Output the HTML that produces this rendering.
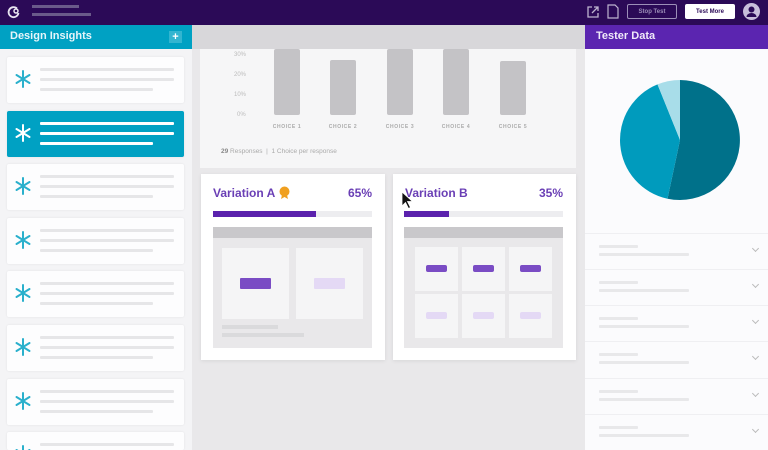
<!DOCTYPE html>
<html><head><meta charset="utf-8"><style>
*{margin:0;padding:0;box-sizing:border-box}
html,body{width:768px;height:450px;overflow:hidden}
body{position:relative;background:#e9e8ea;font-family:"Liberation Sans",sans-serif}
#wrap{position:absolute;left:0;top:0;width:768px;height:450px;overflow:hidden}
.a{position:absolute}
.ln{position:absolute;height:3px;border-radius:1px;background:#e6e6e8}
.card{position:absolute;left:7px;width:177px;height:46px;background:#fdfdfe;border-radius:2px;box-shadow:0 0 2px rgba(0,0,0,.08);overflow:hidden}
.ast{position:absolute;left:8px;top:11px}
.bar{position:absolute;width:26px;background:#c4c3c6;border-radius:2px}
.lbl{position:absolute;top:124px;font-size:5px;letter-spacing:.6px;color:#aaa;font-weight:bold;width:40px;text-align:center}
.row{position:absolute;left:585px;width:183px;height:36px;border-top:1px solid #efeff2;overflow:hidden}
.chev{position:absolute;right:10px;top:12px;width:5px;height:5px;border-right:1px solid #bbb;border-bottom:1px solid #bbb;transform:rotate(45deg)}
.btn{display:flex;align-items:center;justify-content:center;font-size:6px;font-weight:bold;border-radius:2px}
</style></head><body><div id="wrap">
<div class="a" style="left:0;top:0;width:768px;height:25px;background:#2b0a57"></div>
<svg class="a" style="left:7px;top:5px" width="14" height="14" viewBox="0 0 14 14"><path d="M10 3.5A5 5 0 1 0 11.5 8" fill="none" stroke="#e8e4f0" stroke-width="1.8"/><circle cx="9" cy="6" r="2" fill="none" stroke="#e8e4f0" stroke-width="1.5"/></svg>
<div class="a" style="left:32px;top:5px;width:47px;height:3px;background:#6a5a8a"></div>
<div class="a" style="left:32px;top:13px;width:59px;height:3px;background:#6a5a8a"></div>
<svg class="a" style="left:586px;top:5px" width="14" height="14" viewBox="0 0 14 14" fill="none" stroke="#bdb3cf" stroke-width="1.3"><path d="M6 2H2v10h10V8M8 2h4v4M12 2L6 8"/></svg>
<svg class="a" style="left:607px;top:4px" width="12" height="15" viewBox="0 0 12 15" fill="none" stroke="#bdb3cf" stroke-width="1.2"><path d="M1 1h7l3 3v10H1z"/></svg>
<div class="a btn" style="left:627px;top:4px;width:50px;height:15px;border:1px solid #9c8fb8;color:#9c8fb8">Stop Test</div>
<div class="a btn" style="left:685px;top:4px;width:50px;height:15px;background:#fff;color:#2b0a57">Test More</div>
<svg class="a" style="left:743px;top:3px" width="17" height="17" viewBox="0 0 17 17"><circle cx="8.5" cy="8.5" r="8.5" fill="#c8bedb"/><circle cx="8.5" cy="6.5" r="3" fill="#2b0a57"/><path d="M3.5 14a5 4 0 0 1 10 0z" fill="#2b0a57"/></svg>

<div class="a" style="left:0;top:25px;width:192px;height:425px;background:#f4f4f6"></div>
<div class="a" style="left:0;top:25px;width:192px;height:24px;background:#00a1c3"></div>
<div class="a" style="left:10px;top:30px;color:#e6f5fa;font-size:11px;font-weight:bold">Design Insights</div>
<div class="a" style="left:169px;top:31px;width:13px;height:12px;background:#33b5d0;color:#fff;font-size:11px;line-height:12px;text-align:center;font-weight:bold">+</div>
<div id="cards"></div>

<div class="a" style="left:192px;top:25px;width:393px;height:24px;background:#d8d7da"></div>
<div class="a" style="left:200px;top:49px;width:376px;height:119px;background:#f6f6f7"></div>
<div class="a" style="left:234px;top:52px;font-size:6px;color:#bbb">30%</div>
<div class="a" style="left:234px;top:72px;font-size:6px;color:#bbb">20%</div>
<div class="a" style="left:234px;top:92px;font-size:6px;color:#bbb">10%</div>
<div class="a" style="left:237px;top:112px;font-size:6px;color:#bbb">0%</div>
<div class="bar" style="left:274px;top:49px;height:66px"></div>
<div class="bar" style="left:330px;top:60px;height:55px"></div>
<div class="bar" style="left:387px;top:49px;height:66px"></div>
<div class="bar" style="left:443px;top:49px;height:66px"></div>
<div class="bar" style="left:500px;top:61px;height:54px"></div>
<div class="lbl" style="left:267px">CHOICE 1</div>
<div class="lbl" style="left:323px">CHOICE 2</div>
<div class="lbl" style="left:380px">CHOICE 3</div>
<div class="lbl" style="left:436px">CHOICE 4</div>
<div class="lbl" style="left:493px">CHOICE 5</div>
<div class="a" style="left:221px;top:148px;font-size:6.5px;color:#aaa"><b style="color:#888">29</b> Responses &nbsp;|&nbsp; 1 Choice per response</div>

<div class="a" style="left:201px;top:174px;width:184px;height:186px;background:#fff;box-shadow:0 1px 4px rgba(0,0,0,.08)"></div>
<div class="a" style="left:213px;top:186px;font-size:12px;font-weight:bold;color:#6a3fb5">Variation A</div>
<svg class="a" style="left:279px;top:186px" width="11" height="13" viewBox="0 0 11 13"><circle cx="5.5" cy="5.5" r="5" fill="#f0a020"/><path d="M3 9l-1 4 3.5-2 3.5 2-1-4z" fill="#f0a020"/></svg>
<div class="a" style="left:348px;top:186px;font-size:12px;font-weight:bold;color:#6a3fb5">65%</div>
<div class="a" style="left:213px;top:211px;width:159px;height:6px;background:#ededf0"></div>
<div class="a" style="left:213px;top:211px;width:103px;height:6px;background:#5b22ad"></div>
<div class="a" style="left:213px;top:227px;width:159px;height:121px;background:#e9e8ea"></div>
<div class="a" style="left:213px;top:227px;width:159px;height:11px;background:#c9c8cb"></div>
<div class="a" style="left:222px;top:248px;width:67px;height:71px;background:#f5f5f6"></div>
<div class="a" style="left:296px;top:248px;width:67px;height:71px;background:#f5f5f6"></div>
<div class="a" style="left:240px;top:278px;width:31px;height:11px;background:#7a4cc4;border-radius:1px"></div>
<div class="a" style="left:314px;top:278px;width:31px;height:11px;background:#e4d9f5;border-radius:1px"></div>
<div class="a" style="left:222px;top:325px;width:56px;height:4px;background:#dadadc"></div>
<div class="a" style="left:222px;top:333px;width:82px;height:4px;background:#dadadc"></div>

<div class="a" style="left:393px;top:174px;width:183px;height:186px;background:#fff;box-shadow:0 1px 4px rgba(0,0,0,.08)"></div>
<div class="a" style="left:405px;top:186px;font-size:12px;font-weight:bold;color:#6a3fb5">Variation B</div>
<div class="a" style="left:539px;top:186px;font-size:12px;font-weight:bold;color:#6a3fb5">35%</div>
<div class="a" style="left:404px;top:211px;width:159px;height:6px;background:#ededf0"></div>
<div class="a" style="left:404px;top:211px;width:45px;height:6px;background:#5b22ad"></div>
<div class="a" style="left:404px;top:227px;width:159px;height:121px;background:#e9e8ea"></div>
<div class="a" style="left:404px;top:227px;width:159px;height:11px;background:#c9c8cb"></div>
<div id="grid"></div>
<svg class="a" style="left:401px;top:191px" width="12" height="18" viewBox="0 0 12 18"><path d="M1 1v14l3.5-3.5 3 6 2-1-3-6h5z" fill="#111" stroke="#fff" stroke-width=".8"/></svg>

<div class="a" style="left:585px;top:25px;width:183px;height:425px;background:#fbfbfd"></div>
<div class="a" style="left:585px;top:25px;width:183px;height:24px;background:#5b25b0"></div>
<div class="a" style="left:596px;top:30px;color:#f0eaf9;font-size:11px;font-weight:bold">Tester Data</div>
<svg class="a" style="left:620px;top:80px" width="120" height="120" viewBox="620 80 120 120">
<path d="M680 140L680 80A60 60 0 1 1 667.5 198.7Z" fill="#00718a"/>
<path d="M680 140L667.5 198.7A60 60 0 0 1 657.5 84.4Z" fill="#009bbd"/>
<path d="M680 140L657.5 84.4A60 60 0 0 1 680 80Z" fill="#a8dde9"/>
</svg>
<div id="rows"></div>
</div>
<script>
var c='';
[57,111,164,218,271,325,379,432].forEach(function(y,i){
 var sel=i==1, col=sel?'#fff':'#2ab0cc', lc=sel?'#fff':'#e6e6e8';
 var h=i==7?18:46;
 c+='<div class="card" style="top:'+y+'px;height:'+h+'px;'+(sel?'background:#00a1c3;':'')+'">'+
 '<svg class="ast" width="16" height="22" viewBox="0 0 16 22"><g stroke="'+col+'" stroke-width="2" stroke-linecap="round"><path d="M8 3v16M1.5 7l13 8M14.5 7l-13 8"/></g></svg>'+
 '<div class="ln" style="left:33px;top:11px;width:134px;background:'+lc+'"></div>'+
 (i==7?'':'<div class="ln" style="left:33px;top:21px;width:134px;background:'+lc+'"></div>'+
 '<div class="ln" style="left:33px;top:31px;width:113px;background:'+lc+'"></div>')+'</div>';
});
document.getElementById('cards').innerHTML=c;
var g='';
[415,462,509].forEach(function(x){[247,294].forEach(function(y,j){
 g+='<div class="a" style="left:'+x+'px;top:'+y+'px;width:43px;height:44px;background:#f5f5f6"></div>'+
 '<div class="a" style="left:'+(x+11)+'px;top:'+(y+18)+'px;width:21px;height:7px;border-radius:2px;background:'+(j?'#e4d9f5':'#7a4cc4')+'"></div>';
});});
document.getElementById('grid').innerHTML=g;
var r='';
[233,269,305,341,378,414].forEach(function(y){
 r+='<div class="row" style="top:'+y+'px;height:'+Math.min(36,450-y)+'px"><div class="ln" style="left:14px;top:11px;width:39px;background:#e8e8ea"></div><div class="ln" style="left:14px;top:19px;width:90px;background:#e8e8ea"></div><div class="chev"></div></div>';
});
document.getElementById('rows').innerHTML=r;
</script>
</body></html>
